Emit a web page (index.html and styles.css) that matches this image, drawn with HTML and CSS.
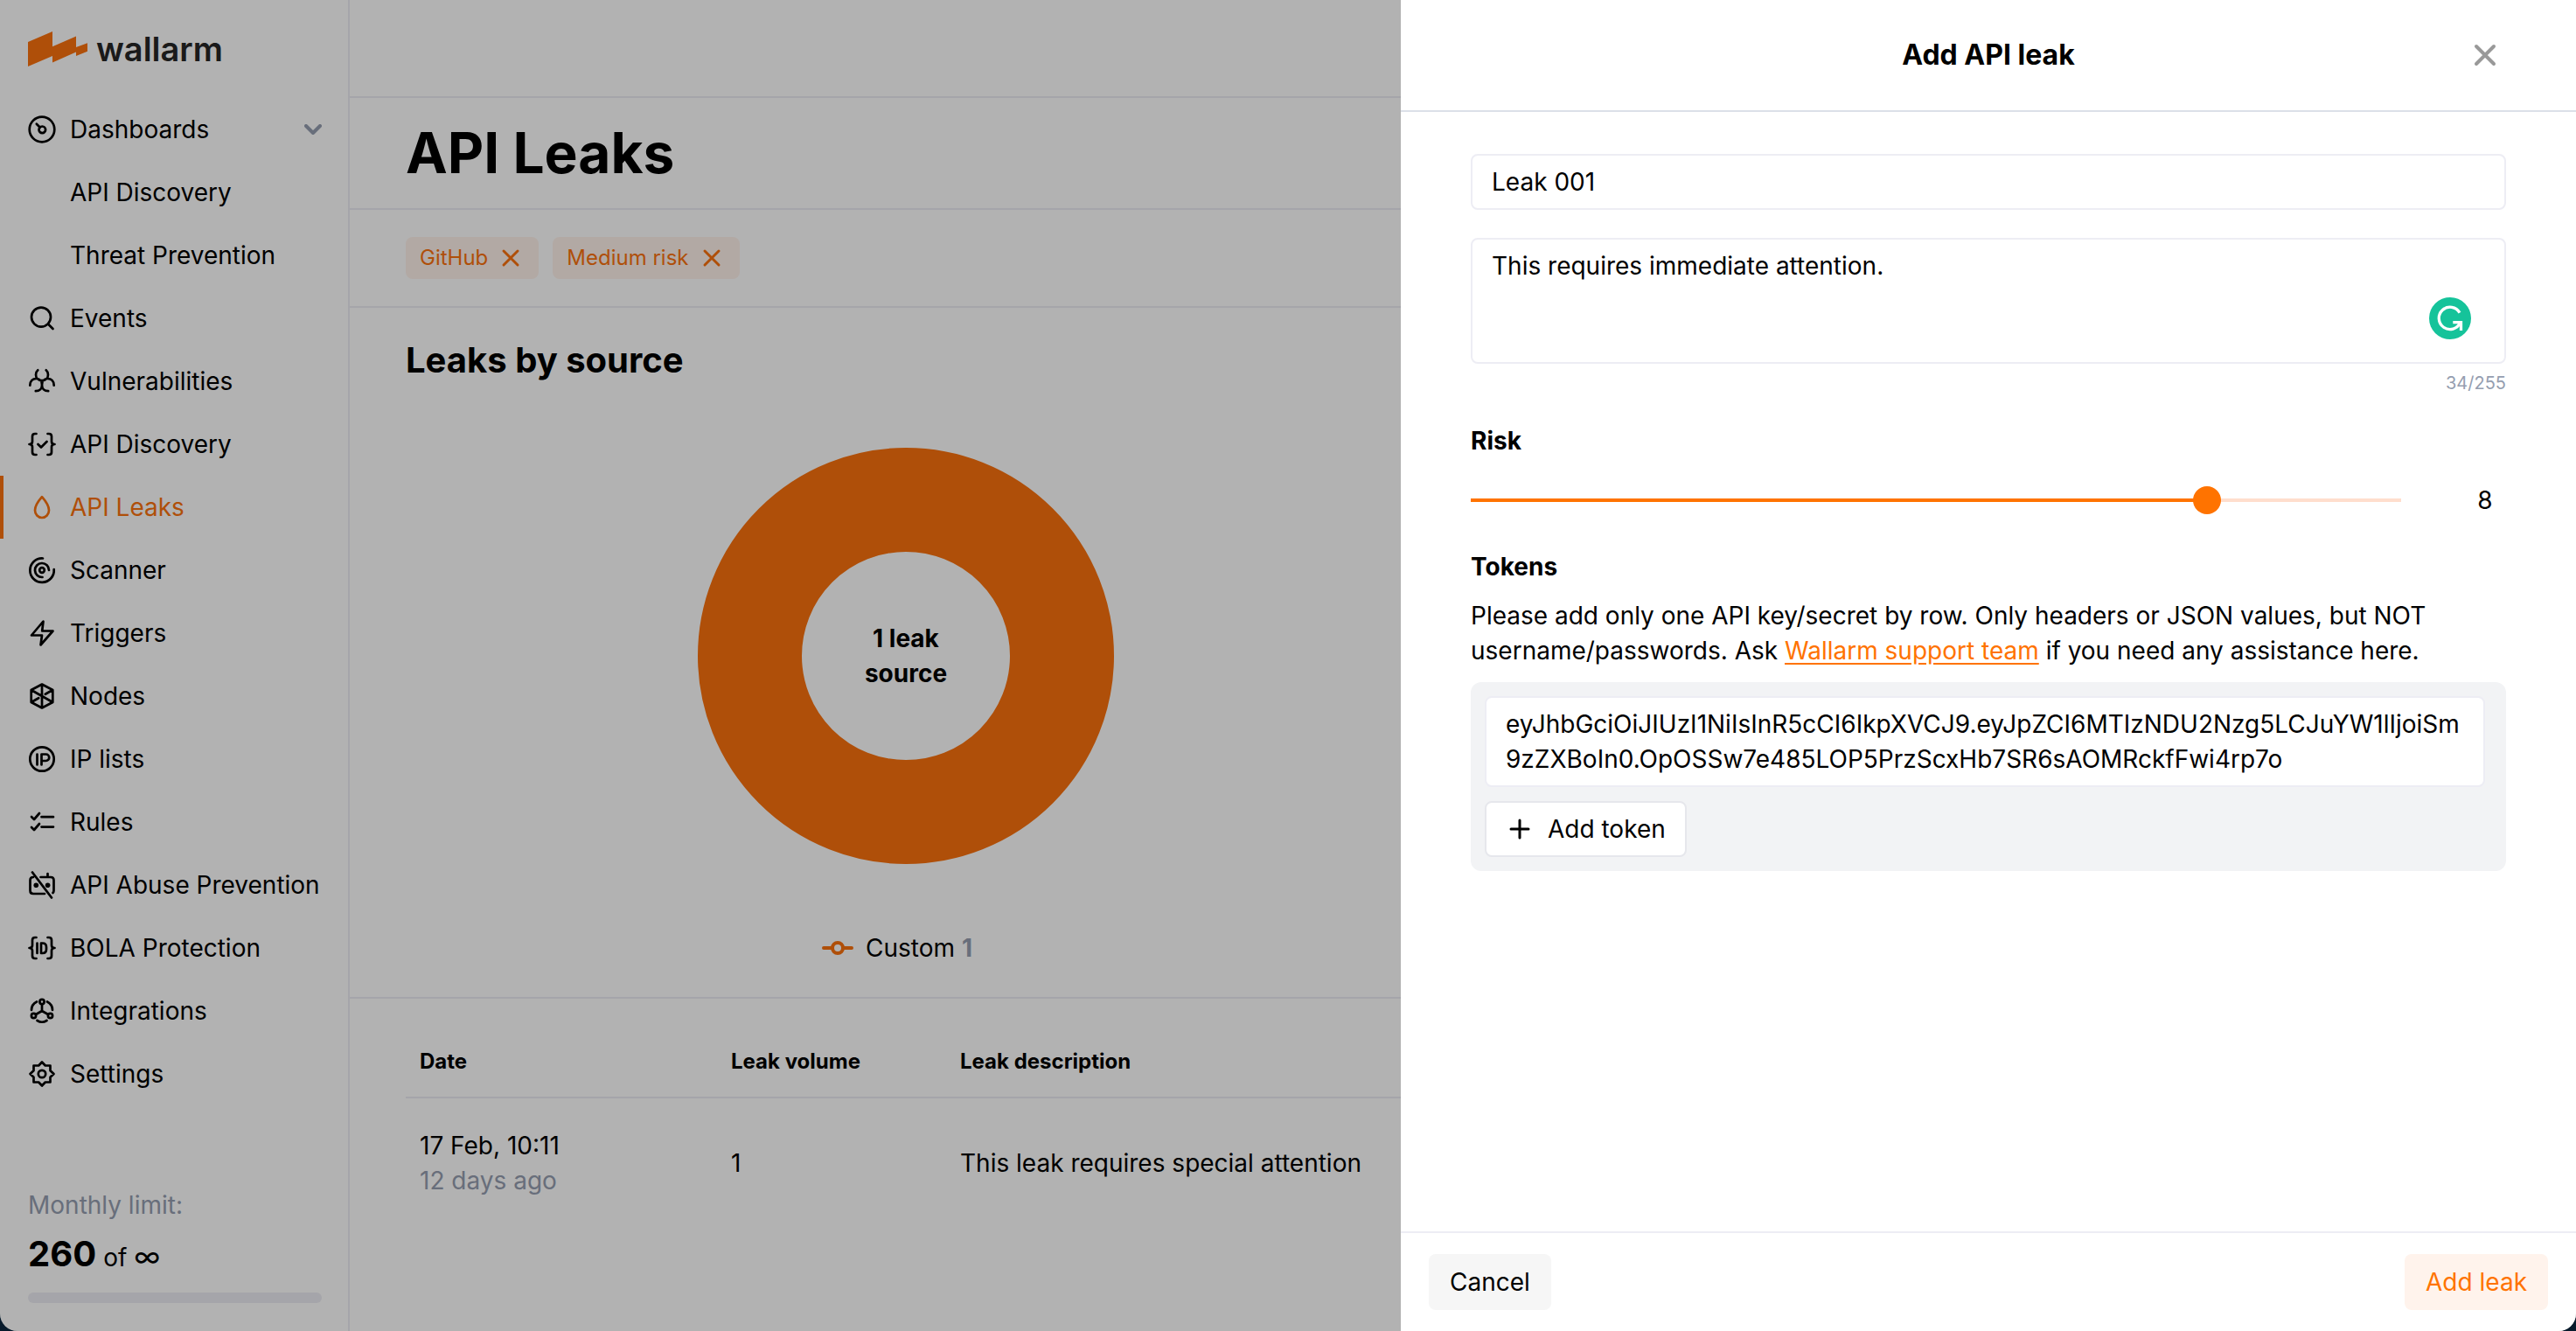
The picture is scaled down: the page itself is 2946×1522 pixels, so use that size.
FILE: index.html
```html
<!DOCTYPE html>
<html lang="en">
<head>
<meta charset="utf-8">
<meta name="viewport" content="width=device-width, initial-scale=1">
<title>API Leaks</title>
<link rel="stylesheet" href="styles.css">
</head>
<body>
<div class="window">
  <aside class="sidebar">
    <a class="logo" href="#">
      <svg class="logo-mark" viewBox="0 0 68 40" aria-hidden="true"><path d="M0 12 28 0V17.300L55 5.500V18L68 13.300V22.700L55 28V23.500L28 35.500V28L0 40z"/></svg>
      <span>wallarm</span>
    </a>
    <nav class="nav">
      <a class="nav-item" href="#">
        <svg class="icon" viewBox="0 0 32 32"><circle cx="16" cy="16" r="14.300"/><circle cx="16.300" cy="16.300" r="3.800"/><path d="m9.800 9.800 4 4"/></svg>
        <span>Dashboards</span>
        <svg class="chevron" viewBox="0 0 20 12"><path d="m2 2 8 8 8-8"/></svg>
      </a>
      <a class="nav-item nav-sub" href="#">API Discovery</a>
      <a class="nav-item nav-sub" href="#">Threat Prevention</a>
      <a class="nav-item" href="#">
        <svg class="icon" viewBox="0 0 32 32"><circle cx="15" cy="14.600" r="11"/><path d="m23 22.500 5.500 5.500"/></svg>
        <span>Events</span>
      </a>
      <a class="nav-item" href="#">
        <svg class="icon" viewBox="0 0 32 32"><path d="M11.300 3.300c-1.800 1.500-2.300 3.300-2.300 5.200 0 4 3 6.700 7 6.700s7-2.700 7-6.700c0-1.900-.5-3.700-2.300-5.200M2.300 20.700c0-5.200 3.200-7.700 7-7.700 4 0 6.700 3 6.700 7.200 0 4-2.700 7-7.200 7M29.700 20.700c0-5.200-3.200-7.700-7-7.700-4 0-6.700 3-6.700 7.200 0 4 2.700 7 7.200 7"/></svg>
        <span>Vulnerabilities</span>
      </a>
      <a class="nav-item" href="#">
        <svg class="icon" viewBox="0 0 32 32"><path d="M9.500 4H8Q5 4 5 7v6q0 3-3.500 3Q5 16 5 19v6q0 3 3 3h1.500M22.500 4H24q3 0 3 3v6q0 3 3.500 3-3.500 0-3.500 3v6q0 3-3 3h-1.500M11.500 16l3.500 3.500 6.500-6.500"/></svg>
        <span>API Discovery</span>
      </a>
      <a class="nav-item nav-active" href="#" aria-current="page">
        <svg class="icon" viewBox="0 0 32 32"><path d="M16 4.200c3.500 4 8 9.500 8 15.300a8 8.500 0 0 1-16 0C8 13.700 12.500 8.200 16 4.200z"/></svg>
        <span>API Leaks</span>
      </a>
      <a class="nav-item" href="#">
        <svg class="icon" viewBox="0 0 32 32"><path d="M17 2.500A13.700 13.700 0 1 0 29.700 15"/><path d="M16.500 24A8 8 0 1 1 24 16"/><circle cx="16" cy="16" r="2.800"/></svg>
        <span>Scanner</span>
      </a>
      <a class="nav-item" href="#">
        <svg class="icon" viewBox="0 0 32 32"><path d="M17.500 2.500 4 18.500h12L14.500 29.500 28.500 13.500H16.200z"/></svg>
        <span>Triggers</span>
      </a>
      <a class="nav-item" href="#">
        <svg class="icon" viewBox="0 0 32 32"><path d="M16 2.500 28.300 9v14L16 29.500 3.700 23V9zM16 2.500v27M3.700 9l24.600 14M28.300 9l-8.500 4.800M3.700 23l8.500-4.800"/></svg>
        <span>Nodes</span>
      </a>
      <a class="nav-item" href="#">
        <svg class="icon" viewBox="0 0 32 32"><circle cx="16" cy="16" r="13.700"/><path d="M10.500 10.500v12M15.500 22.500v-12h5a3.700 3.700 0 0 1 0 7.500h-5"/></svg>
        <span>IP lists</span>
      </a>
      <a class="nav-item" href="#">
        <svg class="icon" viewBox="0 0 32 32"><path d="m4 10 3 3 6-7M4 22l3 3 6-7M15.500 10.200h13.500M15.500 21.600h13.500"/></svg>
        <span>Rules</span>
      </a>
      <a class="nav-item" href="#">
        <svg class="icon" viewBox="0 0 32 32"><path d="M14.500 7H26q3.500 0 3.500 3.500v12q0 1.500-1 2.500M19 26H6q-3.500 0-3.500-3.500v-12Q2.500 7 6 7M22.500 7V3M5 1.500l22 29"/><circle class="dot" cx="9.300" cy="16.300" r="2.800"/><circle class="dot" cx="22.600" cy="16.300" r="2.800"/></svg>
        <span>API Abuse Prevention</span>
      </a>
      <a class="nav-item" href="#">
        <svg class="icon" viewBox="0 0 32 32"><path d="M9.500 4H8Q5 4 5 7v6q0 3-3.500 3Q5 16 5 19v6q0 3 3 3h1.500M22.500 4H24q3 0 3 3v6q0 3 3.500 3-3.500 0-3.500 3v6q0 3-3 3h-1.500M10.500 10.500v11.500M15 10.500h1.500q4.500 0 4.500 4.500v2.500q0 4.500-4.500 4.500H15z"/></svg>
        <span>BOLA Protection</span>
      </a>
      <a class="nav-item" href="#">
        <svg class="icon" viewBox="0 0 32 32"><circle cx="16" cy="5.500" r="2.600"/><circle cx="6.500" cy="21.500" r="2.600"/><circle cx="25.500" cy="21.500" r="2.600"/><path d="M16 8.500V16M16 16l-7 4M16 16l7 4M10 5.500C6 7.500 4 10 4 15M22 5.500c4 2 6 4.500 6 9.500M10.500 27q5.500 3.500 11 0"/></svg>
        <span>Integrations</span>
      </a>
      <a class="nav-item" href="#">
        <svg class="icon" viewBox="0 0 32 32"><path d="M16 2.500 19.800 6.500 25.500 6.500 25.500 12.200 29.500 16 25.500 19.800 25.500 25.500 19.800 25.500 16 29.500 12.200 25.500 6.500 25.500 6.500 19.800 2.500 16 6.500 12.200 6.500 6.500 12.200 6.500z"/><circle cx="16" cy="16" r="4.200"/></svg>
        <span>Settings</span>
      </a>
    </nav>
    <div class="limit">
      <div class="limit-label">Monthly limit:</div>
      <div class="limit-value"><strong>260</strong><span>of</span><span class="limit-max">∞</span></div>
      <div class="limit-bar"></div>
    </div>
  </aside>

  <main class="main">
    <div class="topbar"></div>
    <header class="page-head"><h1>API Leaks</h1></header>
    <div class="filters">
      <button class="chip" type="button">GitHub <svg class="chip-x" viewBox="0 0 32 32"><path d="m8 8 16 16M24 8 8 24"/></svg></button>
      <button class="chip" type="button">Medium risk <svg class="chip-x" viewBox="0 0 32 32"><path d="m8 8 16 16M24 8 8 24"/></svg></button>
    </div>
    <section class="charts">
      <div class="chart">
        <h2>Leaks by source</h2>
        <div class="donut"><span>1 leak<br>source</span></div>
        <div class="legend">
          <svg class="legend-mark" viewBox="0 0 36 16"><path d="M2 8h9M25 8h9"/><circle cx="18" cy="8" r="6"/></svg>
          <span>Custom <b>1</b></span>
        </div>
      </div>
    </section>
    <section class="leaks">
      <table>
        <colgroup><col class="col-date"><col class="col-volume"><col></colgroup>
        <thead><tr><th>Date</th><th>Leak volume</th><th>Leak description</th></tr></thead>
        <tbody><tr><td>17 Feb, 10:11<div class="muted">12 days ago</div></td><td>1</td><td>This leak requires special attention</td></tr></tbody>
      </table>
    </section>
  </main>

  <div class="backdrop"></div>

  <form class="drawer" role="dialog" aria-labelledby="drawer-title">
    <header class="drawer-head">
      <h2 id="drawer-title">Add API leak</h2>
      <button class="close" type="button" aria-label="Close"><svg viewBox="0 0 28 28"><path d="m4 4 20 20M24 4 4 24"/></svg></button>
    </header>
    <div class="drawer-body">
      <input class="field" type="text" value="Leak 001" aria-label="Leak name">
      <div class="note">
        <textarea class="field area" aria-label="Leak description" maxlength="255">This requires immediate attention.</textarea>
        <svg class="grammar" viewBox="0 0 48 48" aria-hidden="true"><circle cx="24" cy="24" r="24"/><path d="M35 17.600A12.700 12.700 0 1 0 35.700 28.700M27.300 28.700H36.500V38"/></svg>
      </div>
      <div class="counter">34/255</div>
      <label class="label" for="risk">Risk</label>
      <div class="risk">
        <input class="slider" id="risk" type="range" min="0" max="10" value="8">
        <output for="risk">8</output>
      </div>
      <label class="label" for="token">Tokens</label>
      <p class="hint">Please add only one API key/secret by row. Only headers or JSON values, but NOT username/passwords. Ask <a href="#">Wallarm support team</a> if you need any assistance here.</p>
      <div class="tokens">
        <textarea class="field token" id="token">eyJhbGciOiJIUzI1NiIsInR5cCI6IkpXVCJ9.eyJpZCI6MTIzNDU2Nzg5LCJuYW1lIjoiSm9zZXBoIn0.OpOSSw7e485LOP5PrzScxHb7SR6sAOMRckfFwi4rp7o</textarea>
        <button class="btn btn-outline" type="button"><svg class="plus" viewBox="0 0 32 32"><path d="M16 6v20M6 16h20"/></svg>Add token</button>
      </div>
    </div>
    <footer class="drawer-foot">
      <button class="btn btn-plain" type="button">Cancel</button>
      <button class="btn btn-accent" type="submit">Add leak</button>
    </footer>
  </form>
</div>
</body>
</html>
```
FILE: styles.css
```css
* { box-sizing: border-box; }

:root {
  --orange: #fb720e;
  --line: #ededf4;
  --muted: #959eb0;
}

body {
  margin: 0;
  background: #071a2b;
  color: #000;
  font: 28px/40px Inter, "Liberation Sans", sans-serif;
}

h1, h2, p { margin: 0; }
button, input, textarea { font: inherit; color: inherit; }
svg { fill: none; stroke: currentColor; stroke-linecap: round; stroke-linejoin: round; flex: none; }

.window {
  position: relative;
  display: flex;
  min-height: 100vh;
  overflow: hidden;
  background: #fff;
  border-radius: 0 0 20px 20px;
}

/* Sidebar */
.sidebar {
  flex: none;
  display: flex;
  flex-direction: column;
  width: 400px;
  border-right: 2px solid var(--line);
}
.logo {
  display: flex;
  align-items: center;
  gap: 10px;
  height: 112px;
  padding: 0 32px;
  color: #262626;
  font-size: 38px;
  font-weight: 600;
  text-decoration: none;
}
.logo-mark { width: 68px; height: 40px; fill: var(--orange); stroke: none; }
.nav { display: flex; flex-direction: column; }
.nav-item {
  display: flex;
  align-items: center;
  gap: 16px;
  height: 72px;
  padding: 0 30px 0 28px;
  border-left: 4px solid transparent;
  color: #000;
  text-decoration: none;
  white-space: nowrap;
}
.nav-sub { padding-left: 76px; }
.nav-active { border-color: var(--orange); color: var(--orange); }
.icon { width: 32px; height: 32px; stroke-width: 2.700; }
.icon .dot { fill: currentColor; stroke: none; }
.chevron { width: 20px; height: 12px; margin-left: auto; color: var(--muted); stroke-width: 4; }
.limit { margin-top: auto; padding: 32px 30px 32px 32px; }
.limit-label { color: var(--muted); }
.limit-value { display: flex; align-items: baseline; gap: 8px; margin: 8px 0 16px; }
.limit-value strong { font-size: 40px; line-height: 56px; }
.limit-max { font-size: 32px; }
.limit-bar { height: 12px; border-radius: 6px; background: var(--line); }

/* Page */
.main { flex: 1; min-width: 0; }
.topbar { height: 112px; border-bottom: 2px solid var(--line); }
.page-head {
  display: flex;
  align-items: center;
  height: 128px;
  padding: 0 64px;
  border-bottom: 2px solid var(--line);
}
h1 { font-size: 64px; line-height: 80px; }
.filters {
  display: flex;
  align-items: center;
  gap: 16px;
  height: 112px;
  padding: 0 64px;
  border-bottom: 2px solid var(--line);
}
.chip {
  display: flex;
  align-items: center;
  gap: 10px;
  height: 48px;
  padding: 0 16px;
  border: 0;
  border-radius: 8px;
  background: #fff2eb;
  color: var(--orange);
  font-size: 24px;
}
.chip-x { width: 32px; height: 32px; stroke-width: 3; }
.charts {
  display: grid;
  grid-template-columns: 1fr 1fr;
  gap: 130px;
  padding: 32px 64px 36px;
  border-bottom: 2px solid var(--line);
}
.chart { display: flex; flex-direction: column; align-items: center; }
.chart h2 { align-self: flex-start; font-size: 40px; line-height: 56px; }
.donut {
  display: grid;
  place-items: center;
  width: 476px;
  height: 476px;
  margin: 72px 0 76px;
  border: 119px solid var(--orange);
  border-radius: 50%;
  font-weight: 700;
  text-align: center;
}
.legend { display: flex; align-items: center; gap: 14px; padding-right: 20px; }
.legend-mark { width: 36px; height: 16px; color: var(--orange); stroke-width: 4; }
.legend b, .muted { color: var(--muted); }

.leaks { padding: 32px 64px; }
table { width: 100%; border-collapse: separate; border-spacing: 0; table-layout: fixed; }
.col-date { width: 356px; }
.col-volume { width: 262px; }
th, td { padding: 0 16px; text-align: left; vertical-align: middle; }
th { height: 82px; border-bottom: 2px solid var(--line); font-size: 24px; }
td { padding: 34px 16px; }

/* Drawer */
.backdrop { position: absolute; inset: 0; background: rgba(0, 0, 0, .3); }
.drawer {
  --orange: #ff7300;
  position: absolute;
  top: 0;
  right: 0;
  bottom: 0;
  display: flex;
  flex-direction: column;
  width: 1344px;
  max-width: 100%;
  background: #fff;
}
.drawer-head {
  display: grid;
  grid-template-columns: 1fr auto 1fr;
  align-items: center;
  height: 128px;
  padding: 0 90px;
  border-bottom: 2px solid #dce0e8;
}
.drawer-head h2 { grid-column: 2; font-size: 32px; line-height: 40px; }
.close { justify-self: end; padding: 0; border: 0; background: none; color: #999; line-height: 0; }
.close svg { width: 28px; height: 28px; stroke-width: 4; }
.drawer-body { flex: 1; display: flex; flex-direction: column; padding: 48px 80px; }
.field {
  display: block;
  width: 100%;
  height: 64px;
  padding: 10px 22px;
  border: 2px solid var(--line);
  border-radius: 8px;
  background: #fff;
  outline: 0;
  resize: none;
  overflow: hidden;
}
.note { position: relative; margin-top: 32px; }
.area { height: 144px; }
.grammar { position: absolute; right: 40px; bottom: 28px; width: 48px; height: 48px; fill: #15c39a; stroke: none; }
.grammar path { fill: none; stroke: #fff; stroke-width: 3.300; stroke-linecap: butt; stroke-linejoin: miter; }
.counter { margin: 8px 0 32px; color: var(--muted); font-size: 20px; line-height: 28px; text-align: right; }
.label { font-weight: 700; }
.risk { display: flex; align-items: center; gap: 72px; margin: 28px 0 36px; }
.risk output { width: 48px; text-align: center; }
.slider {
  flex: 1;
  height: 32px;
  margin: 0;
  appearance: none;
  background: linear-gradient(90deg, var(--orange) 80%, #ffdecd 80%) center / 100% 4px no-repeat;
}
.slider::-webkit-slider-thumb {
  appearance: none;
  width: 32px;
  height: 32px;
  border-radius: 50%;
  background: var(--orange);
}
.hint { margin: 16px 0; }
.hint a { color: var(--orange); text-underline-offset: 4px; }
.tokens { padding: 16px 24px 16px 16px; border-radius: 12px; background: #f2f3f5; }
.token { height: 104px; margin-bottom: 16px; word-break: break-all; }
.drawer-foot {
  display: flex;
  align-items: center;
  justify-content: space-between;
  height: 114px;
  padding: 0 32px;
  border-top: 2px solid var(--line);
}
.btn { display: flex; align-items: center; height: 64px; padding: 0 24px; border: 0; border-radius: 8px; }
.btn-outline { gap: 16px; padding: 0 22px; border: 2px solid #e6e7ec; background: #fff; }
.plus { width: 32px; height: 32px; stroke-width: 3; }
.btn-plain { background: #f6f6f6; }
.btn-accent { background: #fff3ec; color: var(--orange); }
```
